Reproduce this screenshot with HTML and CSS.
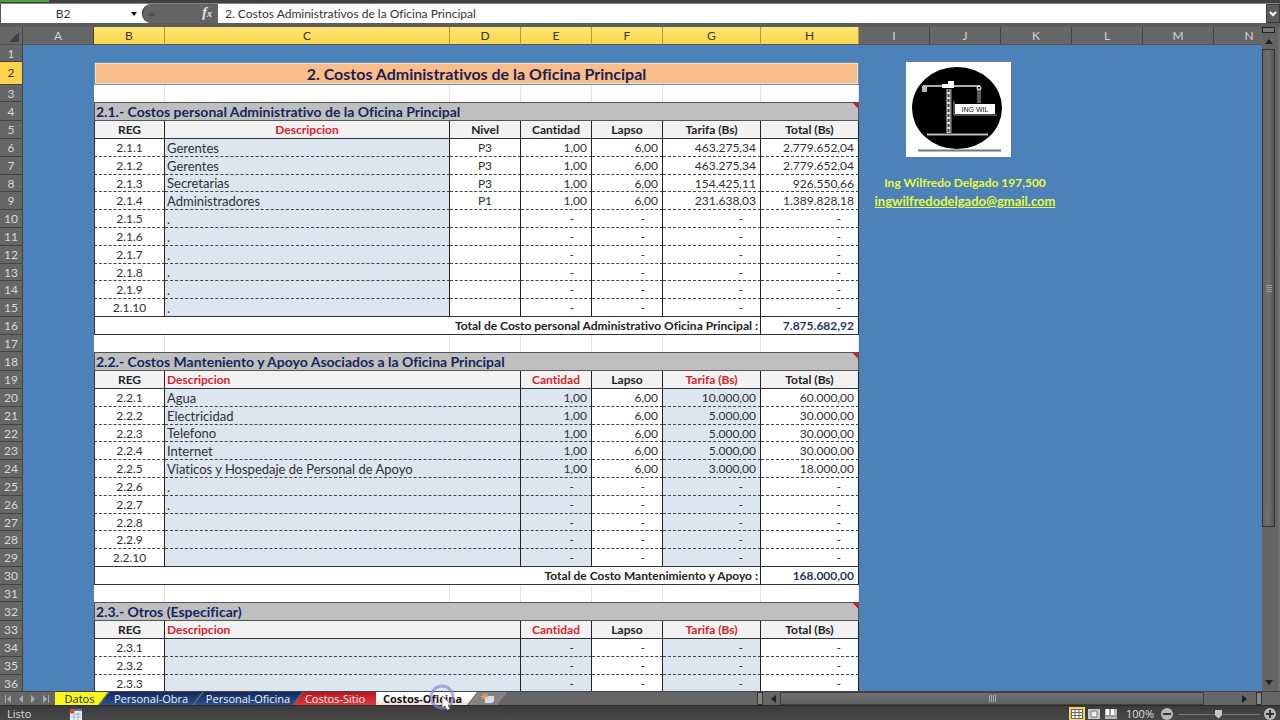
FILE: index.html
```html
<!DOCTYPE html>
<html lang="es">
<head>
<meta charset="utf-8">
<title>Costos-Oficina</title>
<link rel="stylesheet" href="styles.css">
</head>
<body>
<div class="ribbon-edge"><span class="file-tab"></span></div>
<div class="formula-bar">
  <div class="name-box"><input class="name-input" aria-label="Cuadro de nombres" value="B2"><span class="caret"></span></div>
  <div class="formula-tools"><span class="grip">=</span><span class="fx">f<small>x</small></span></div>
  <input class="formula-input" aria-label="Barra de fórmulas" value="2. Costos Administrativos de la Oficina Principal">
  <button class="expand" aria-label="Expandir barra"><svg width="8" height="6" viewBox="0 0 8 6"><path d="M1 1l3 3 3-3" fill="none" stroke="#fff" stroke-width="2"/></svg></button>
</div>
<main class="workspace">
  <div class="sheet">
    <table class="grid">
      <colgroup>
        <col class="c-num"><col class="c-std"><col class="c-std"><col class="c-desc"><col class="c-std"><col class="c-std"><col class="c-std"><col class="c-amt"><col class="c-amt"><col class="c-std"><col class="c-std"><col class="c-std"><col class="c-std"><col class="c-std"><col class="c-std">
      </colgroup>
      <thead>
        <tr><th class="corner"><svg width="10" height="10" viewBox="0 0 10 10"><path d="M10 0v10H0z" fill="#414141"/></svg></th><th>A</th><th class="on">B</th><th class="on">C</th><th class="on">D</th><th class="on">E</th><th class="on">F</th><th class="on">G</th><th class="on">H</th><th>I</th><th>J</th><th>K</th><th>L</th><th>M</th><th>N</th></tr>
      </thead>
      <tbody id="rows"></tbody>
    </table>
  </div>
  <div class="vscroll">
    <span class="split-h"></span>
    <svg class="arrow" width="8" height="5" viewBox="0 0 8 5"><path d="M0 5l4-5 4 5z" fill="#222"/></svg>
    <span class="vthumb"><i></i><i></i><i></i><i></i></span>
    <svg class="arrow arrow-end" width="8" height="5" viewBox="0 0 8 5"><path d="M0 0l4 5 4-5z" fill="#222"/></svg>
  </div>
</main>
<div class="tab-row">
  <div class="nav">
    <svg width="7" height="8" viewBox="0 0 7 8"><path d="M0 0h1v8H0zM6 0v8L2 4z"/></svg>
    <svg width="7" height="8" viewBox="0 0 7 8"><path d="M5 0v8L1 4z"/></svg>
    <svg width="7" height="8" viewBox="0 0 7 8"><path d="M1 0v8l4-4z"/></svg>
    <svg width="7" height="8" viewBox="0 0 7 8"><path d="M0 0v8l4-4zM5 0h1v8H5z"/></svg>
  </div>
  <button class="tab first yellow">Datos</button>
  <button class="tab navy obra">Personal-Obra</button>
  <button class="tab navy oficina">Personal-Oficina</button>
  <button class="tab last red-tab">Costos-Sitio</button>
  <button class="tab first active">Costos-Oficina</button>
  <button class="tab add" aria-label="Insertar hoja"><svg width="14" height="11" viewBox="0 0 14 11"><path d="M4 3h9v5l-2 2H4z" fill="#d5def2"/><path d="M4 0v7M0 3.500h8M1 1l6 5M7 1L1 6" stroke="#e9ac3e"/></svg></button>
  <span class="split-v"></span>
  <div class="hscroll">
    <svg width="5" height="8" viewBox="0 0 5 8"><path d="M5 0v8L0 4z" fill="#222"/></svg>
    <span class="hthumb"><i></i><i></i><i></i><i></i></span>
    <svg class="right-arrow" width="5" height="8" viewBox="0 0 5 8"><path d="M0 0v8l5-4z" fill="#222"/></svg>
  </div>
  <span class="split-v"></span>
  <span class="size-corner"></span>
  <svg class="pointer" width="30" height="34" viewBox="0 0 30 34"><circle cx="14" cy="14" r="11" fill="none" stroke="#8783dc" stroke-opacity=".65" stroke-width="3"/><path d="M14 13v12l3-2 2 4 3-1-2-4h4z" fill="#fff" stroke="#555" stroke-width=".7"/></svg>
</div>
<footer class="status">
  <span class="ready">Listo</span>
  <svg class="macro" width="13" height="12" viewBox="0 0 13 12"><path d="M1 1h12v11H1z" fill="#edf2fb"/><path d="M1 1h12v2H1z" fill="#4d79c4"/><path d="M2 6h10M2 9h10M5 4v8M9 4v8" stroke="#9eb4d8"/><circle cx="3" cy="3" r="2.500" fill="#cd4932"/></svg>
  <span class="views">
    <button class="view selected" aria-label="Normal"><svg width="12" height="10" viewBox="0 0 12 10"><path d="M0 0h12v10H0z" fill="#fff"/><path d="M0 .5h12M0 3.500h12M0 6.500h12M0 9.500h12M.5 0v10M4 0v10M8 0v10M11.500 0v10" stroke="#666"/></svg></button>
    <button class="view" aria-label="Diseño de página"><svg width="12" height="10" viewBox="0 0 12 10"><path d="M0 0h12v10H0z" fill="#c9c9c9"/><path d="M3 2h6v6H3z" fill="#eee" stroke="#777"/></svg></button>
    <button class="view" aria-label="Vista de saltos"><svg width="12" height="10" viewBox="0 0 12 10"><path d="M0 0h12v10H0z" fill="#bbb"/><path d="M1 0h3v6H1zM6 0h3v6H6z" fill="#fff"/><path d="M5 0v6M0 7h12" stroke="#777"/></svg></button>
  </span>
  <span class="zoom-value">100%</span>
  <button class="round" aria-label="Alejar"><svg width="12" height="12" viewBox="0 0 12 12"><circle cx="6" cy="6" r="6" fill="#b9b9b9"/><path d="M2 6h8" stroke="#333" stroke-width="2"/></svg></button>
  <input class="zoom" type="range" aria-label="Zoom" min="0" max="100" value="50">
  <button class="round" aria-label="Acercar"><svg width="12" height="12" viewBox="0 0 12 12"><circle cx="6" cy="6" r="6" fill="#b9b9b9"/><path d="M2 6h8M6 2v8" stroke="#333" stroke-width="2"/></svg></button>
</footer>
<template id="side">
  <div class="side">
    <svg class="logo" width="105" height="95" viewBox="0 0 105 95" role="img" aria-label="ING WIL">
      <path d="M0 0h105v95H0z" fill="#fff"/>
      <ellipse cx="51" cy="46" rx="45" ry="41" fill="#000"/>
      <path d="M17 24h57" stroke="#aaa" stroke-width="2"/>
      <path d="M16 24h5v6h-5z" fill="#bbb"/>
      <path d="M36 22h12v4H36zM42 19h6v3h-6z" fill="#fff"/>
      <path d="M42.500 27v44" stroke="#ddd" stroke-width="4"/>
      <path d="M42.500 27v44" stroke="#444" stroke-width="2" stroke-dasharray="3 2"/>
      <path d="M45 27v44M48 39v14h43" stroke="#999" fill="none"/>
      <path d="M72 26v15M74 26v15" stroke="#bbb"/>
      <circle cx="73" cy="26" r="2" fill="none" stroke="#fff"/>
      <path d="M49 42h40v10H49z" fill="#fff"/>
      <path d="M21 72.500h61" stroke="#bbb" stroke-width="2"/>
      <path d="M12 88.500h83" stroke="#777" stroke-width="2"/>
      <text class="logo-text" x="69" y="50" text-anchor="middle">ING WIL</text>
    </svg>
    <p class="author">Ing Wilfredo Delgado 197,500</p>
    <a class="mail" href="mailto:ingwilfredodelgado@gmail.com">ingwilfredodelgado@gmail.com</a>
  </div>
</template>
<script src="script.js"></script>
</body>
</html>
```
FILE: styles.css
```css
* { box-sizing: border-box; }
body {
  margin: 0;
  height: 100vh;
  display: flex;
  flex-direction: column;
  overflow: hidden;
  background: #606060;
  color: #303030;
  font: 12px/16px Lato, "Open Sans", sans-serif;
  font-variant-ligatures: none;
}
button, input { font: inherit; border: 0; padding: 0; margin: 0; }
svg { display: block; }

.ribbon-edge { height: 4px; background: #414141; border-bottom: 1px solid #858585; }
.file-tab { display: block; width: 49px; height: 2px; background: #47a33c; }
.formula-bar { display: flex; height: 19px; background: #fff; }
.name-box { display: flex; align-items: center; width: 142px; background: #fff; border-left: 1px solid #555; padding-right: 5px; }
.name-input { flex: 1; min-width: 0; padding-right: 6px; text-align: center; background: none; color: #333; }
.caret { border: 3px solid transparent; border-top: 4px solid #111; border-bottom: 0; }
.formula-tools { display: flex; justify-content: space-between; align-items: center; width: 76px; padding: 0 6px 0 5px; background: #646464; border-left: 1px solid #333; border-radius: 9px 0 0 9px; }
.grip { color: #444; }
.fx { font: italic bold 14px/16px "Liberation Serif", serif; color: #e4e4e4; }
.fx small { font-size: 10px; }
.formula-input { flex: 1; min-width: 0; padding-left: 7px; background: #fff; color: #333; }
.expand { width: 14px; display: flex; align-items: center; justify-content: center; background: #5c5c5c; border: 1px solid #3c3c3c; }

.workspace { flex: 1; min-height: 0; display: flex; border-top: 4px solid #5c5c5c; }
.sheet { flex: 1; min-width: 0; overflow: hidden; background: #4d81b9; }
.grid { table-layout: fixed; border-collapse: separate; border-spacing: 0; width: 1285px; }
.c-num { width: 23px; }
.c-std { width: 71px; }
.c-desc { width: 285px; }
.c-amt { width: 98px; }
.grid th, .grid td { padding: 0; height: 18px; line-height: 16px; overflow: hidden; white-space: nowrap; }
.grid thead th { background: #666; color: #d4d4d4; font-weight: 400; border-right: 1px solid #444; border-bottom: 1px solid #555; }
.grid thead th.on { background: linear-gradient(#ffe476, #f9d74d); color: #3c3820; border-right-color: #b39a3c; }
.corner svg { margin: 2px 0 0 9px; }
.grid .num { background: #666; color: #d8d8d8; font-weight: 400; text-align: center; border-bottom: 1px solid #444; border-right: 1px solid #444; }
.grid .num.on { background: #fcd34c; color: #3c3820; }
.blue { background: #4d81b9; vertical-align: top; }

.grid .h17 > * { height: 17px; line-height: 15px; }
.grid .h19 > * { height: 19px; line-height: 17px; }
.grid .h23 > * { height: 23px; }
.title { background: #f8bd8b; color: #1c2050; font-size: 16px; font-weight: 700; text-align: center; border: 2px solid #7c8a92; outline: 1px solid #dfe6e6; outline-offset: -2px; }
.gap { background: #fff; border-right: 1px solid #e3e3e3; }
.section { background: #bfbfbf; color: #14275c; font-size: 14px; font-weight: 700; text-align: left; border: 1px solid #555; border-right: 0; }
.grid .section { padding-left: 1px; }
.note { background: linear-gradient(225deg, #d92020 4px, transparent 4px) #bfbfbf; border: 1px solid #555; border-left: 0; }
.grid .head { background: #f2f2f2; color: #222; font-weight: 700; text-align: center; border-right: 1px solid #222; border-bottom: 1px solid #333; }
.grid .red { color: #db2128; }
.grid .left { text-align: left; padding-left: 2px; }
.cell { background: #fff; border-right: 1px solid #222; border-bottom: 1px dashed #444; }
.reg, .level { text-align: center; }
.desc, .input { background: #dce6f1; }
.desc { font-size: 13px; }
.grid .amount { text-align: right; padding-right: 4px; }
.grid .dash { padding-right: 17px; }
.reg, .head.edge, .total.edge { border-left: 1px solid #333; }
.end .cell { border-bottom: 1px solid #333; }
.grid .total { background: #fff; color: #222; font-weight: 700; text-align: right; padding-right: 2px; border-right: 1px solid #222; border-bottom: 1px solid #333; }
.grid .sum { color: #1f3864; padding-right: 4px; }

.side { display: flex; flex-direction: column; align-items: center; width: 212px; padding-top: 17px; color: #e6fb3c; font-weight: 700; line-height: 18px; }
.logo { align-self: flex-start; margin-left: 47px; }
.logo-text { font: 7px "Liberation Sans", sans-serif; fill: #111; }
.author { margin: 17px 0 0; }
.mail { color: inherit; font-size: 13px; }

.vscroll { width: 18px; display: flex; flex-direction: column; align-items: center; padding-right: 3px; background: #646464; border-right: 2px solid #707070; }
.split-h { width: 13px; height: 6px; margin-bottom: 6px; background: #777; border: 1px solid #222; }
.vthumb { width: 13px; margin-top: 5px; flex: 0 1 72%; display: flex; flex-direction: column; justify-content: center; align-items: center; gap: 1px; background: linear-gradient(90deg, #666, #707070, #555); border: 1px solid #333; }
.vthumb i { width: 6px; height: 1px; background: #999; }
.arrow { flex: none; }
.arrow-end { margin: auto 0 6px; }

.tab-row { position: relative; display: flex; height: 14px; background: #666; border-top: 1px solid #444; font: 11px/13px "Open Sans", sans-serif; }
.nav { display: flex; align-items: center; justify-content: space-between; width: 55px; padding: 0 5px; fill: #aaa; }
.tab { height: 13px; color: #f2f2f2; clip-path: polygon(10px 0, 100% 0, calc(100% - 10px) 100%, 0 100%); }
.tab.first { clip-path: polygon(0 0, 100% 0, calc(100% - 10px) 100%, 0 100%); }
.tab.last { clip-path: polygon(10px 0, 100% 0, 100% 100%, 0 100%); }
.yellow { width: 53px; background: #f7f71c; color: #222; padding-right: 4px; }
.navy { background: linear-gradient(#12295f, #2b4f8f); margin-left: -8px; }
.obra { width: 102px; }
.oficina { width: 108px; }
.red-tab { width: 82px; margin-left: -8px; background: linear-gradient(#b9151f, #dc3a3e); }
.active { width: 101px; background: linear-gradient(#fff 50%, #f6d3cc); color: #111; font-weight: 700; padding-right: 8px; }
.add { width: 39px; margin-left: -9px; background: #858585; display: flex; align-items: center; justify-content: center; }
.split-v { width: 6px; background: #888; border: 1px solid #333; }
.add + .split-v { margin-left: auto; }
.hscroll { width: 493px; display: flex; align-items: center; padding: 0 9px 0 8px; }
.hthumb { flex: 1; max-width: 424px; height: 13px; margin-left: 4px; display: flex; align-items: center; justify-content: center; gap: 1px; background: linear-gradient(#707070, #606060); border: 1px solid #404040; }
.hthumb i { width: 1px; height: 7px; background: #aaa; }
.right-arrow { margin-left: auto; }
.size-corner { width: 18px; }
.pointer { position: absolute; left: 428px; top: -9px; z-index: 2; }

.status { display: flex; align-items: center; height: 15px; padding: 2px 4px 0 7px; background: linear-gradient(#3c3c3c, #484848); border-top: 1px solid #2c2c2c; color: #ddd; font: 11px/14px "Open Sans", sans-serif; }
.ready { width: 62px; }
.views { display: flex; margin-left: auto; gap: 1px; }
.view { width: 16px; height: 14px; display: flex; justify-content: center; align-items: center; background: none; }
.view.selected { background: #fbd35c; }
.zoom-value { width: 42px; text-align: center; }
.round { background: none; }
.zoom { appearance: none; width: 91px; height: 12px; background: linear-gradient(#777, #777) center / 82px 1px no-repeat; }
.zoom::-webkit-slider-thumb { appearance: none; width: 7px; height: 9px; background: #c8c8c8; clip-path: polygon(0 0, 100% 0, 100% 65%, 50% 100%, 0 65%); }
```
FILE: script.js
```js
const sections = [
  {
    title: "2.1.- Costos personal Administrativo de la Oficina Principal",
    id: "2.1", level: true, count: 10,
    total: ["Total de Costo personal Administrativo Oficina Principal :", "7.875.682,92"],
    items: [
      ["Gerentes", "P3", "463.275,34", "2.779.652,04"],
      ["Gerentes", "P3", "463.275,34", "2.779.652,04"],
      ["Secretarias", "P3", "154.425,11", "926.550,66"],
      ["Administradores", "P1", "231.638,03", "1.389.828,18"]
    ],
    dots: 10
  },
  {
    title: "2.2.- Costos Manteniento y Apoyo Asociados a la Oficina Principal",
    id: "2.2", level: false, count: 10,
    total: ["Total de Costo Mantenimiento y Apoyo :", "168.000,00"],
    items: [
      ["Agua", "", "10.000,00", "60.000,00"],
      ["Electricidad", "", "5.000,00", "30.000,00"],
      ["Telefono", "", "5.000,00", "30.000,00"],
      ["Internet", "", "5.000,00", "30.000,00"],
      ["Viaticos y Hospedaje de Personal de Apoyo", "", "3.000,00", "18.000,00"]
    ],
    dots: 7
  },
  { title: "2.3.- Otros (Especificar)", id: "2.3", level: false, count: 3, items: [], dots: 0 }
];

const rows = [];
const add = (html, cls = "") => rows.push({ html, cls });
const gap = '<td class="gap"></td>';
const amount = (text, cls = "") =>
  `<td class="cell amount ${text === "-" ? "dash" : ""} ${cls}">${text}</td>`;

add('<td class="blue" colspan="7"></td>', "h17");
add('<td class="title" colspan="7">2. Costos Administrativos de la Oficina Principal</td>', "h23");
add(gap.repeat(7), "h17");

for (const s of sections) {
  const span = s.level ? 1 : 2;
  const red = s.level ? "" : "red";
  add(`<th class="section" colspan="6">${s.title}</th><td class="note"></td>`, "h19");
  add(`<th class="head edge">REG</th><th class="head red ${s.level ? "" : "left"}" colspan="${span}">Descripcion</th>` +
    (s.level ? '<th class="head">Nivel</th>' : "") +
    `<th class="head ${red}">Cantidad</th><th class="head">Lapso</th><th class="head ${red}">Tarifa (Bs)</th><th class="head">Total (Bs)</th>`);
  for (let i = 0; i < s.count; i++) {
    const it = s.items[i];
    const tint = s.level ? "" : "input";
    const desc = it ? it[0] : i < s.dots ? "." : "";
    add(`<td class="cell reg">${s.id}.${i + 1}</td><td class="cell desc left" colspan="${span}">${desc}</td>` +
      (s.level ? `<td class="cell level">${it ? it[1] : ""}</td>` : "") +
      amount(it ? "1,00" : "-", tint) + amount(it ? "6,00" : "-") +
      amount(it ? it[2] : "-", tint) + amount(it ? it[3] : "-"),
      (i % 5 === 2 ? "h17 " : "") + (i === s.count - 1 && s.total ? "end" : ""));
  }
  if (s.total) {
    add(`<td class="total edge" colspan="6">${s.total[0]}</td><td class="total sum">${s.total[1]}</td>`);
    add(gap.repeat(7), "h17");
  }
}

const side = document.getElementById("side").innerHTML;
document.getElementById("rows").innerHTML = rows.map((r, i) =>
  `<tr class="${r.cls}"><th class="num ${i === 1 ? "on" : ""}">${i + 1}</th>` +
  (i === 0 ? `<td class="blue" rowspan="${rows.length}"></td>` : "") + r.html +
  (i === 0 ? `<td class="blue" colspan="6" rowspan="${rows.length}">${side}</td>` : "") + "</tr>"
).join("");
```
